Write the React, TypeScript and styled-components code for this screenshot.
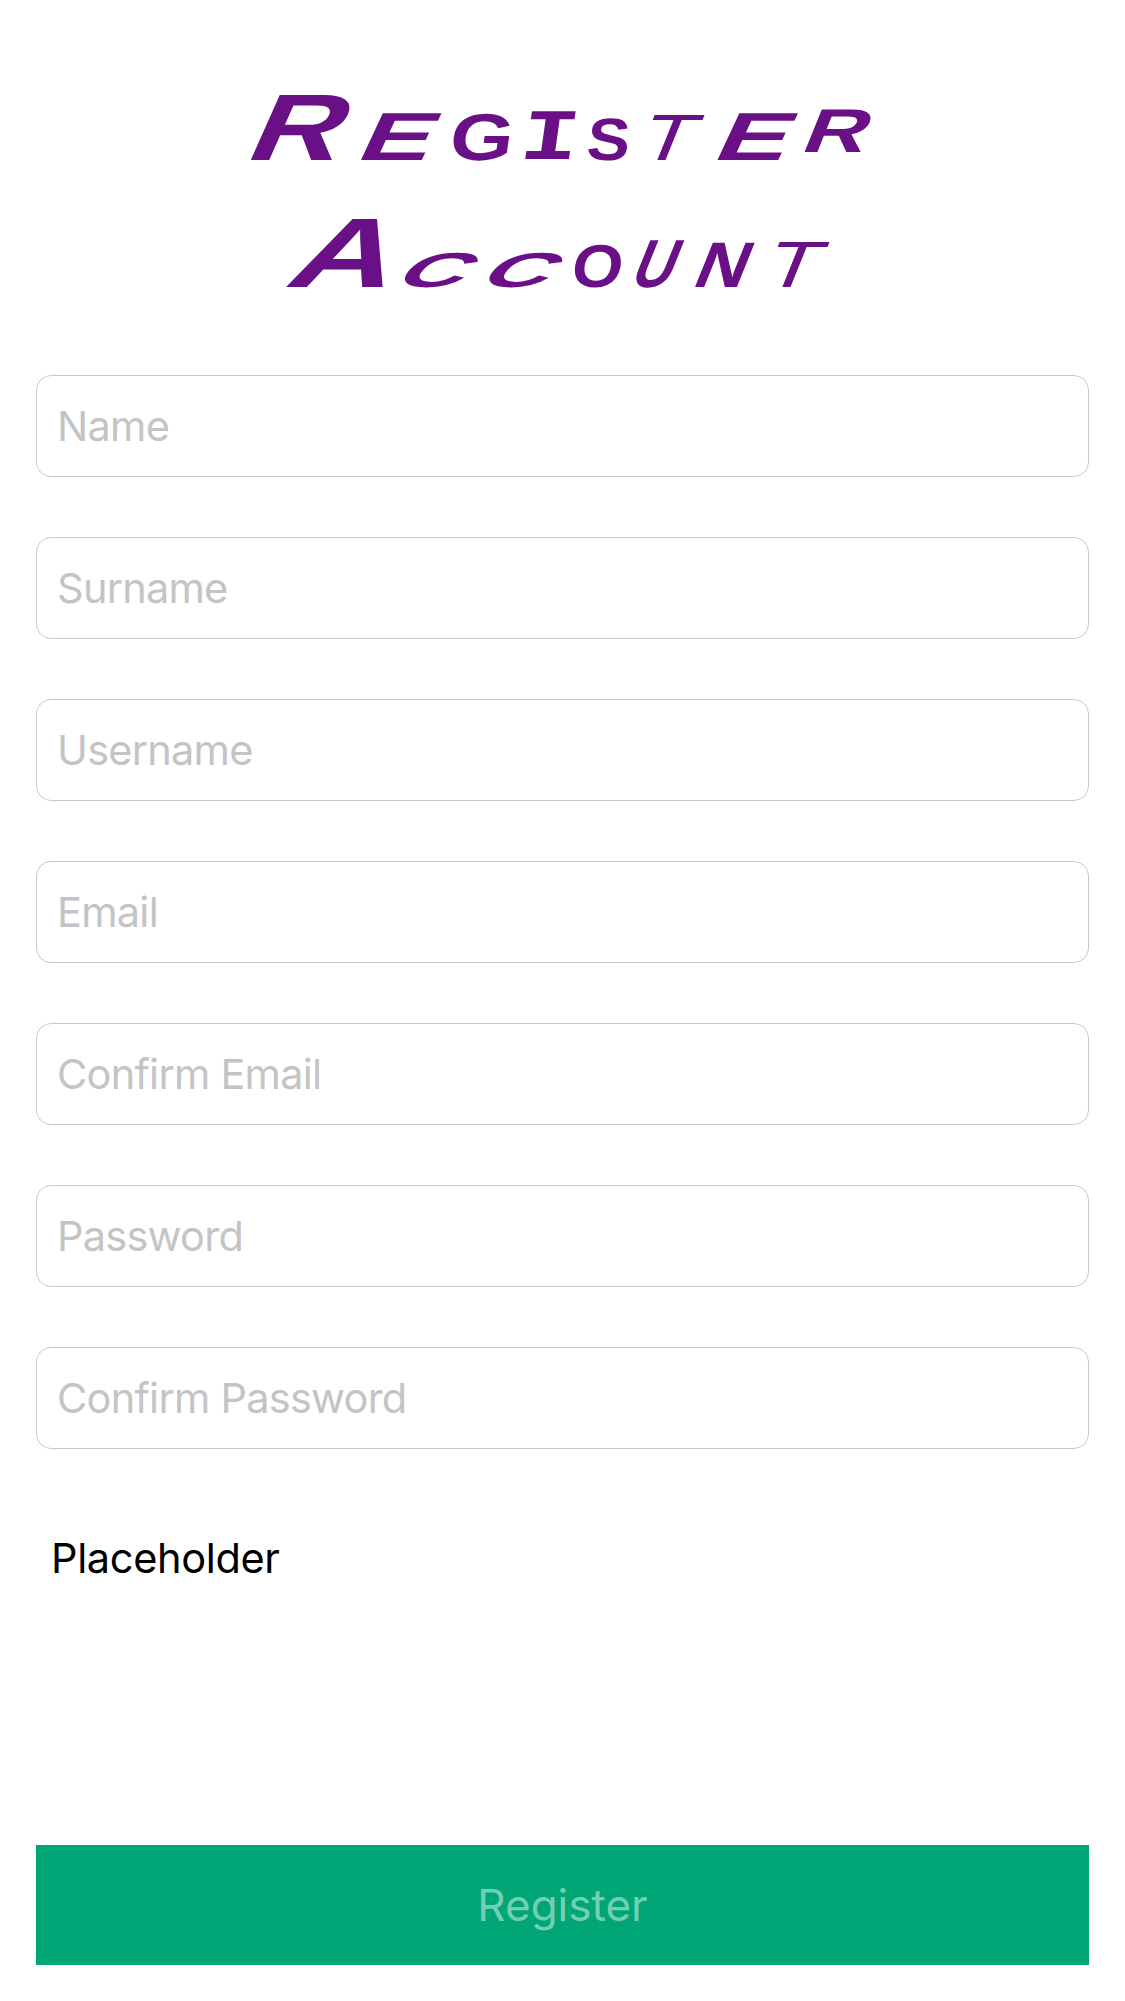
import React from "react";
import styled, { createGlobalStyle } from "styled-components";

const GlobalStyle = createGlobalStyle`
  *, *::before, *::after { box-sizing: border-box; }
  html, body { margin: 0; background: #fff; }
  body { font-family: Inter, Roboto, "Liberation Sans", sans-serif; }
`;

const Screen = styled.main`
  display: flex;
  flex-direction: column;
  width: 1125px;
  height: 2001px;
  padding: 66px 36px 36px;
  background: #fff;
  overflow: hidden;
`;

const Title = styled.h1`
  display: flex;
  flex-direction: column;
  align-items: center;
  height: 309px;
  margin: 0;
  color: #6a1087;
  font: 700 90px/127px "Liberation Sans", Arial, sans-serif;
  font-variant-caps: small-caps;
`;

const Word = styled.span`
  display: flex;
  align-items: baseline;
  height: 127px;
`;

interface LetterProps {
  $cell: number;
  $slant: number;
  $stretch: number;
  $rise: number;
  $shift: number;
  $lift?: number;
  $slab?: boolean;
  $thin?: boolean;
}

const Letter = styled.span<LetterProps>`
  width: ${(p) => p.$cell}px;
  text-align: center;
  font-family: ${(p) => (p.$slab ? '"Liberation Mono", monospace' : "inherit")};
  font-weight: ${(p) => (p.$thin ? 400 : 700)};
  transform: translate(${(p) => p.$shift}px, ${(p) => -(p.$lift ?? 0)}px)
    skewX(${(p) => -p.$slant}deg) scale(${(p) => p.$stretch}, ${(p) => p.$rise});
  transform-origin: 50% 94px;
`;

const Form = styled.form`
  display: flex;
  flex: 1;
  flex-direction: column;
  gap: 60px;
`;

const Field = styled.input`
  width: 100%;
  height: 102px;
  padding: 0 20px;
  border: 1px solid #c8c8c8;
  border-radius: 15px;
  outline: none;
  background: #fff;
  color: #000;
  font: 400 41.5px/50px Inter, Roboto, sans-serif;
  letter-spacing: -0.75px;
  &::placeholder { color: #c4c4c6; opacity: 1; }
`;

const Message = styled.p`
  margin: 24px 0 0;
  padding-left: 15px;
  color: #000;
  font-size: 41.5px;
  line-height: 50px;
  letter-spacing: -0.35px;
`;

const Submit = styled.button`
  height: 120px;
  margin-top: auto;
  padding: 0;
  border: 0;
  background: #00a676;
  color: #72cfb4;
  font: 400 44px/54px Inter, Roboto, sans-serif;
`;

interface Shape extends LetterProps {
  char: string;
}

const words: Shape[][] = [
  [
    { char: "R", $cell: 111, $slant: 24, $stretch: 1.42, $rise: 1.05, $shift: -14 },
    { char: "e", $cell: 88, $slant: 25, $stretch: 1.72, $rise: 1.08, $shift: -12 },
    { char: "g", $cell: 72, $slant: 8, $stretch: 1.3, $rise: 1.05, $shift: -3 },
    { char: "i", $cell: 66, $slant: 8, $stretch: 1.55, $rise: 1.15, $shift: -5, $slab: true },
    { char: "s", $cell: 54, $slant: 5, $stretch: 1.02, $rise: 0.95, $shift: -4 },
    { char: "t", $cell: 77, $slant: 22, $stretch: 1.4, $rise: 1.04, $shift: -15, $thin: true },
    { char: "e", $cell: 87, $slant: 25, $stretch: 1.72, $rise: 1.08, $shift: -12 },
    { char: "r", $cell: 77, $slant: 22, $stretch: 1.4, $rise: 0.98, $shift: -10, $lift: 8 },
  ],
  [
    { char: "A", $cell: 111, $slant: 24, $stretch: 1.6, $rise: 1.1, $shift: -8 },
    { char: "c", $cell: 85, $slant: 42, $stretch: 1.5, $rise: 0.78, $shift: -16 },
    { char: "c", $cell: 86, $slant: 42, $stretch: 1.5, $rise: 0.78, $shift: -17 },
    { char: "o", $cell: 60, $slant: 8, $stretch: 1.04, $rise: 0.96, $shift: -4 },
    { char: "u", $cell: 61, $slant: 22, $stretch: 0.9, $rise: 1.08, $shift: -11 },
    { char: "n", $cell: 72, $slant: 22, $stretch: 1.13, $rise: 1.02, $shift: -10 },
    { char: "t", $cell: 77, $slant: 22, $stretch: 1.4, $rise: 1.04, $shift: -14, $thin: true },
  ],
];

const fields = ["Name", "Surname", "Username", "Email", "Confirm Email", "Password", "Confirm Password"];

export default function App() {
  return (
    <>
      <GlobalStyle />
      <Screen>
        <Title>
          {words.map((letters, w) => (
            <Word key={w}>
              {letters.map(({ char, ...shape }, i) => (
                <Letter key={i} {...shape}>
                  {char}
                </Letter>
              ))}
            </Word>
          ))}
        </Title>
        <Form>
          {fields.map((name) => (
            <Field key={name} aria-label={name} placeholder={name} />
          ))}
          <Message>Placeholder</Message>
          <Submit type="button">Register</Submit>
        </Form>
      </Screen>
    </>
  );
}
